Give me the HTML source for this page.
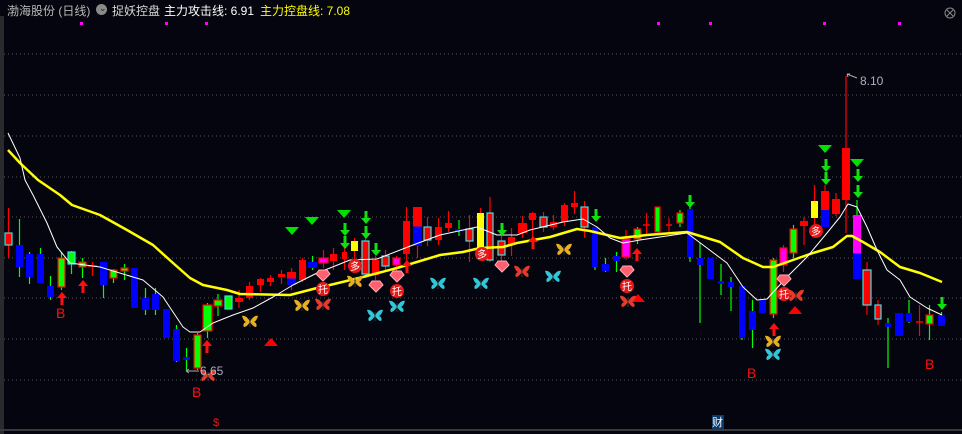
<!DOCTYPE html>
<html><head><meta charset="utf-8"><style>
html,body{margin:0;padding:0;background:#05050f;width:962px;height:434px;overflow:hidden}
#c{position:absolute;left:0;top:0}
.t{position:absolute;top:2px;font:12px "Liberation Sans","Noto Sans CJK SC",sans-serif;white-space:nowrap}
</style></head><body>
<svg id="c" width="962" height="434" xmlns="http://www.w3.org/2000/svg"></svg>
<div class="t" style="left:7px;color:#b8b8b8">渤海股份 (日线)</div>
<div class="t" style="left:96px;top:4px;width:11px;height:11px;border-radius:50%;background:#8a8a8a"></div>
<div class="t" style="left:99px;top:3px;color:#222;font-size:9px">⌄</div>
<div class="t" style="left:112px;color:#d8d8d8">捉妖控盘</div>
<div class="t" style="left:164px;color:#fff">主力攻击线: 6.91</div>
<div class="t" style="left:260px;color:#ffff00">主力控盘线: 7.08</div>
<script>
var s='';
s+='<rect x="0" y="0" width="962" height="434" fill="#05050f"/>';
s+='<rect x="0" y="16" width="4" height="418" fill="#2a2a2e"/>';
s+='<rect x="0" y="429" width="962" height="2" fill="#3a3a3e"/>';
[54,95,136,177,217,258,298,339,380].forEach(function(y){s+='<line x1="4" x2="962" y1="'+y+'" y2="'+y+'" stroke="#555" stroke-width="1" stroke-dasharray="1 3"/>';});
[81,166,206,658,710,824,899].forEach(function(x){s+='<rect x="'+(x-1)+'" y="22" width="3" height="3" fill="#ff00ff"/>';});
s+='<circle cx="950" cy="13" r="5" fill="none" stroke="#888"/><path d="M947 10l6 6M953 10l-6 6" stroke="#888"/>';
var C=[
[5,12,233,245,208,258,'RC'],[16,23,245,267,219,277,'B'],[26,33,254,277,252,284,'B'],[37,44,254,283,248,283,'B'],[47,54,286,297,276,300,'B'],
[58,65,258,287,252,290,'G'],[68,75,252,264,251,274,'GC'],[79,86,262,267,258,278,'G'],[88,97,266,267,262,276,'X'],[100,107,262,285,262,298,'B'],
[110,117,270,278,269,283,'G'],[121,128,268,271,264,280,'G'],[131,138,268,308,268,308,'B'],[142,149,298,310,288,315,'B'],[152,159,294,310,288,315,'B'],
[163,170,309,338,309,338,'B'],[173,180,329,361,325,362,'B'],[183,190,357,360,348,370,'B'],[194,201,335,368,333,370,'G'],[203,212,305,331,303,338,'G'],
[214,222,300,306,294,316,'G'],[225,232,296,309,296,309,'GC'],[235,243,298,302,290,308,'R'],[246,253,286,298,282,300,'R'],[257,264,279,285,278,292,'R'],
[267,274,278,282,275,286,'R'],[278,285,274,277,270,284,'R'],[287,296,272,285,268,290,'RB'],[299,306,260,280,258,282,'R'],[308,317,262,268,256,270,'B'],
[319,328,258,263,250,268,'M'],[330,337,254,261,248,270,'R'],[342,347,252,259,240,270,'R'],[351,358,241,251,238,262,'Y'],[362,369,241,274,236,278,'RC'],
[372,379,260,275,256,280,'R'],[382,389,256,266,250,270,'RC'],[393,400,258,265,256,272,'M'],[403,410,221,254,207,270,'R'],[413,422,207,246,207,258,'RB'],
[424,431,227,240,217,246,'RC'],[435,442,227,240,218,245,'R'],[445,452,223,228,211,232,'R'],[455,463,229,231,220,236,'B'],[466,473,229,241,215,262,'RC'],
[477,484,213,249,208,252,'Y'],[487,493,213,260,197,262,'RC'],[498,505,241,255,228,262,'RC'],[508,515,237,245,228,256,'R'],[518,527,223,233,216,238,'R'],
[529,536,213,220,212,245,'R'],[540,547,217,227,212,232,'RC'],[550,557,222,227,215,230,'R'],[561,568,205,222,203,226,'R'],[571,578,203,207,191,214,'R'],
[581,588,207,227,201,238,'RC'],[592,598,227,267,227,270,'B'],[602,609,264,271,258,272,'B'],[613,620,256,261,252,272,'B'],[622,630,239,257,230,260,'M'],
[634,641,229,239,227,244,'G'],[643,650,225,226,213,234,'X'],[655,660,207,232,207,232,'G'],[666,672,225,226,218,232,'X'],[677,683,213,223,210,227,'G'],
[687,693,209,257,200,262,'B'],[697,703,258,265,243,323,'B'],[707,714,258,279,258,279,'B'],[718,724,281,284,264,295,'B'],[728,734,282,287,277,311,'B'],
[739,745,286,338,286,340,'B'],[749,756,311,330,300,348,'B'],[759,766,300,313,300,313,'B'],[770,777,260,314,258,318,'G'],[780,787,248,265,245,272,'M'],
[790,797,229,253,225,258,'G'],[800,808,221,226,217,245,'R'],[811,818,201,218,185,225,'Y'],[821,829,191,227,185,227,'RB2'],[832,840,199,214,193,216,'R'],
[842,850,148,200,76,233,'R'],[853,861,215,279,200,279,'MB'],[863,871,270,305,262,315,'RC'],[875,881,305,319,300,325,'RC'],[885,891,323,327,318,368,'B'],
[895,903,313,336,313,336,'B'],[906,912,313,322,300,323,'B'],[916,923,322,324,305,336,'X'],[926,933,315,324,305,340,'G'],[938,945,315,326,312,326,'B']];
C.forEach(function(c){var x0=c[0],x1=c[1],t=c[2],b=c[3],wt=c[4],wb=c[5],k=c[6],cx=(x0+x1)/2,w=x1-x0;
 var wc=(k=='B'||k[0]=='G'||k=='GC'||k=='MB')?'#00ff00':'#ff0000';
 s+='<line x1="'+cx+'" x2="'+cx+'" y1="'+wt+'" y2="'+wb+'" stroke="'+wc+'" stroke-width="1.2"/>';
 function r(y0,y1,f,st){s+='<rect x="'+x0+'" y="'+y0+'" width="'+w+'" height="'+Math.max(1,y1-y0)+'" fill="'+f+'"'+(st?' stroke="'+st+'" stroke-width="1.2"':'')+'/>';}
 if(k=='R')r(t,b,'#ff0000');else if(k=='RC')r(t,b,'#ff0000','#40e0e0');else if(k=='B')r(t,b,'#0000ff');
 else if(k=='G')r(t,b,'#00ff00','#ff0000');else if(k=='GC')r(t,b,'#00ff00','#40e0e0');else if(k=='Y')r(t,b,'#ffff00');
 else if(k=='M')r(t,b,'#ff00ff','#ff0000');else if(k=='X')s+='<line x1="'+x0+'" x2="'+x1+'" y1="'+t+'" y2="'+t+'" stroke="#ff0000" stroke-width="1.5"/>';
 else if(k=='RB'){var m=(t+b)/2;r(t,m,'#ff0000');r(m,b,'#0000ff');}
 else if(k=='RB2'){var m=t+(b-t)*0.53;r(t,m,'#ff0000');r(m,b,'#0000ff');}
 else if(k=='MB'){var m=t+(b-t)*0.6;r(t,m,'#ff00ff');r(m,b,'#0000ff');}
});
function pl(p,col,sw){s+='<polyline fill="none" stroke="'+col+'" stroke-width="'+sw+'" stroke-linejoin="round" points="'+p+'"/>';}
pl('8,150 20,163 38,180 60,195 72,205 100,215 127,230 153,245 173,263 190,278 203,285 227,290 240,294 290,295 317,288 330,285 363,277 397,268 440,255 463,252 480,248 503,247 517,243 550,237 577,229 590,231 607,235 620,238 647,235 660,234 687,232 720,242 743,258 763,267 773,267 793,260 813,253 833,247 847,236 852,236 863,242 880,252 900,267 920,273 942,282','#ffff00',2.5);
pl('8,133 20,158 25,180 33,195 47,223 57,247 70,263 100,267 133,277 143,280 163,297 183,327 190,332 200,332 213,323 233,315 253,308 273,297 293,285 317,273 330,268 350,260 377,259 413,245 440,235 477,227 497,235 517,235 530,230 563,222 583,219 597,227 610,238 623,243 640,240 660,237 687,233 707,248 727,263 743,287 757,300 767,299 787,277 807,257 827,233 840,217 848,204 857,207 867,227 877,250 887,270 900,280 910,297 927,308 942,315','#ffffff',1);
function up(x,y){s+='<path d="M'+x+' '+y+'l-5 6h3.5v7h3v-7h3.5z" fill="#ff1010"/>';}
function dn(x,y){s+='<path d="M'+x+' '+y+'l-5 -6h3.5v-7h3v7h3.5z" fill="#10e010"/>';}
function tri(x,y,c,d){s+=d?'<path d="M'+(x-7)+' '+(y-5)+'h14l-7 8z" fill="'+c+'"/>':'<path d="M'+(x-7)+' '+(y+4)+'h14l-7 -8z" fill="'+c+'"/>';}
[[62,292],[83,280],[207,340],[407,260],[533,236],[637,248],[774,323]].forEach(function(a){up(a[0],a[1]);});
[[345,236],[345,249],[366,224],[366,239],[376,256],[502,236],[596,222],[690,208],[826,172],[826,185],[858,182],[858,198],[942,310]].forEach(function(a){dn(a[0],a[1]);});
[[292,232],[312,222],[344,215],[825,150],[857,164]].forEach(function(a){tri(a[0],a[1],'#00e000',1);});
[[271,342],[638,298],[795,310]].forEach(function(a){tri(a[0],a[1],'#ff0000',0);});
function gem(x,y){s+='<path d="M'+(x-7)+' '+(y-2)+'l3 -4h8l3 4l-7 7z" fill="#ff6070" stroke="#ffb0b8" stroke-width="1"/>';}
[[323,276],[376,287],[397,277],[502,267],[627,272],[784,281]].forEach(function(a){gem(a[0],a[1]);});
function circ(x,y,t){s+='<circle cx="'+x+'" cy="'+y+'" r="7" fill="#e81818"/><text x="'+x+'" y="'+(y+4)+'" font-size="10" fill="#fff" text-anchor="middle" font-family="Noto Sans CJK SC,sans-serif">'+t+'</text>';}
[[323,289],[397,291],[627,286],[784,294]].forEach(function(a){circ(a[0],a[1],'托');});
[[355,266],[482,254],[816,231]].forEach(function(a){circ(a[0],a[1],'多');});
function bf(x,y,c){s+='<path d="M'+x+' '+(y+1)+'c-2-5-6-7-8-6c1 3 2 5 4 6c-3 1-3 4-2 5c2 0 4-2 6-5zM'+x+' '+(y+1)+'c2-5 6-7 8-6c-1 3-2 5-4 6c3 1 3 4 2 5c-2 0-4-2-6-5z" fill="'+c+'"/><line x1="'+x+'" x2="'+x+'" y1="'+(y-3)+'" y2="'+(y+6)+'" stroke="#333" stroke-width="1"/>';}
[[250,321],[302,305],[355,281],[564,249],[773,341]].forEach(function(a){bf(a[0],a[1],'#e8b020');});
[[375,315],[397,306],[438,283],[481,283],[553,276],[773,354]].forEach(function(a){bf(a[0],a[1],'#30c8d8');});
[[323,304],[522,271],[628,301],[796,295],[208,375]].forEach(function(a){bf(a[0],a[1],'#e83a2a');});
function T(x,y,t,c,sz){s+='<text x="'+x+'" y="'+y+'" fill="'+c+'" font-size="'+sz+'" font-family="Liberation Sans,Noto Sans CJK SC,sans-serif">'+t+'</text>';}
T(56,318,'B','#ff1010',14);T(192,397,'B','#ff1010',14);T(747,378,'B','#ff1010',14);T(925,369,'B','#ff1010',14);
s+='<path d="M186 371h13M186 371l3-2M186 371l3 2" stroke="#aaa" fill="none"/>';T(200,375,'6.65','#aab0c0',12);
s+='<path d="M847 74l10 4M847 74l1 3M847 74l3 0" stroke="#aaa" fill="none"/>';T(860,85,'8.10','#aab0c0',12);
T(213,426,'$','#ff1010',11);
s+='<rect x="712" y="415" width="12" height="14" fill="#0a3a6a"/>';T(712,426,'财','#fff',11);
document.getElementById('c').innerHTML=s;
</script>
</body></html>
